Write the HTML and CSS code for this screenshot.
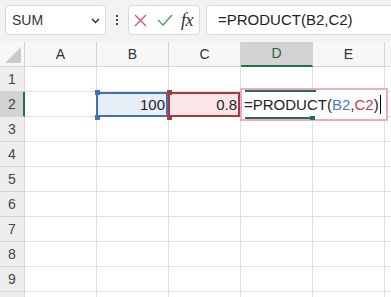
FILE: index.html
```html
<!DOCTYPE html>
<html>
<head>
<meta charset="utf-8">
<link rel="stylesheet" href="styles.css">
</head>
<body>
<div class="toolbar">
  <div class="namebox"><span>SUM</span><svg class="chev" width="9" height="6" viewBox="0 0 9 6"><polyline points="1,1 4.5,4.5 8,1" fill="none" stroke="#333" stroke-width="1.5"/></svg></div>
  <div class="grip"><i></i><i></i><i></i></div>
  <div class="btns">
    <svg class="ico-x" width="13" height="13" viewBox="0 0 13 13"><path d="M1 1 L12 12 M12 1 L1 12" stroke="#d0585c" stroke-width="1.3" fill="none"/></svg>
    <svg class="ico-ok" width="16" height="12" viewBox="0 0 16 12"><polyline points="1,6 6,11 15,1" fill="none" stroke="#4f9d63" stroke-width="1.4"/></svg>
    <span class="fx">fx</span>
  </div>
  <div class="formula">=PRODUCT(B2,C2)</div>
</div>
<div class="sheet">
  <div class="corner"><svg width="25" height="25" viewBox="0 0 25 25"><polygon points="5,21 21,21 21,5" fill="#c9c9c9"/></svg></div>
  <div class="ch">A</div><div class="ch">B</div><div class="ch">C</div><div class="ch ch-sel">D</div><div class="ch">E</div><div class="ch"></div>

  <div class="rh">1</div><div class="cell"></div><div class="cell"></div><div class="cell"></div><div class="cell"></div><div class="cell"></div><div class="cell"></div>

  <div class="rh rh-sel">2</div>
  <div class="cell"></div>
  <div class="cell ref ref-b">100<i class="hd tl"></i><i class="hd bl"></i></div>
  <div class="cell ref ref-c">0.8<i class="hd tl"></i><i class="hd bl"></i></div>
  <div class="cell">
    <div class="edit"><i class="gl gl-top"></i><i class="gl gl-bot"></i><i class="fill"></i>=PRODUCT(<span class="rb">B2</span>,<span class="rc">C2</span>)<span class="caret"></span></div>
  </div>
  <div class="cell"></div><div class="cell"></div>

  <div class="rh">3</div><div class="cell"></div><div class="cell"></div><div class="cell"></div><div class="cell"></div><div class="cell"></div><div class="cell"></div>
  <div class="rh">4</div><div class="cell"></div><div class="cell"></div><div class="cell"></div><div class="cell"></div><div class="cell"></div><div class="cell"></div>
  <div class="rh">5</div><div class="cell"></div><div class="cell"></div><div class="cell"></div><div class="cell"></div><div class="cell"></div><div class="cell"></div>
  <div class="rh">6</div><div class="cell"></div><div class="cell"></div><div class="cell"></div><div class="cell"></div><div class="cell"></div><div class="cell"></div>
  <div class="rh">7</div><div class="cell"></div><div class="cell"></div><div class="cell"></div><div class="cell"></div><div class="cell"></div><div class="cell"></div>
  <div class="rh">8</div><div class="cell"></div><div class="cell"></div><div class="cell"></div><div class="cell"></div><div class="cell"></div><div class="cell"></div>
  <div class="rh">9</div><div class="cell"></div><div class="cell"></div><div class="cell"></div><div class="cell"></div><div class="cell"></div><div class="cell"></div>
  <div class="rh"></div><div class="cell"></div><div class="cell"></div><div class="cell"></div><div class="cell"></div><div class="cell"></div><div class="cell"></div>
</div>
</body>
</html>
```
FILE: styles.css
```css
html, body {
  margin: 0;
  padding: 0;
}
body {
  width: 391px;
  height: 297px;
  overflow: hidden;
  background: #fff;
  font-family: "Liberation Sans", Arial, sans-serif;
  color: #222;
}
.toolbar {
  display: flex;
  align-items: flex-start;
  height: 42px;
  box-sizing: border-box;
  padding: 5px 0 0 5px;
  background: #f3f3f3;
  overflow: hidden;
}
.namebox {
  width: 101px;
  height: 30px;
  box-sizing: border-box;
  background: #fff;
  border: 1px solid #d9d9d9;
  border-radius: 4px;
  display: flex;
  align-items: center;
  justify-content: space-between;
  padding: 0 5px 0 6px;
  font-size: 14px;
  color: #333;
}
.chev {
  margin-top: 1px;
}
.grip {
  width: 22px;
  height: 30px;
  display: flex;
  flex-direction: column;
  align-items: center;
  justify-content: center;
  gap: 2px;
}
.grip i {
  display: block;
  width: 2px;
  height: 2px;
  background: #444;
}
.btns {
  width: 72px;
  height: 30px;
  box-sizing: border-box;
  background: #fff;
  border: 1px solid #d9d9d9;
  border-radius: 4px;
  display: flex;
  align-items: center;
  padding-left: 5px;
}
.ico-ok {
  margin-left: 10px;
}
.fx {
  margin-left: 8px;
  font-family: "Liberation Serif", "Times New Roman", serif;
  font-style: italic;
  font-size: 18px;
  color: #333;
  letter-spacing: -0.5px;
}
.formula {
  flex: 1;
  margin-left: 6px;
  margin-right: -6px;
  height: 30px;
  box-sizing: border-box;
  background: #fff;
  border: 1px solid #d9d9d9;
  border-radius: 4px;
  padding-left: 11px;
  font-size: 15px;
  line-height: 28px;
  color: #222;
  white-space: nowrap;
}
.sheet {
  display: grid;
  grid-template-columns: 25px repeat(6, 72px);
  grid-auto-rows: 25px;
  width: 391px;
  height: 255px;
  overflow: hidden;
}
.corner, .ch, .rh, .cell {
  box-sizing: border-box;
  border-right: 1px solid #e0e0e0;
  border-bottom: 1px solid #e0e0e0;
  position: relative;
}
.corner {
  background: #f7f7f7;
  border-color: #d6d6d6;
}
.corner svg {
  display: block;
}
.ch {
  background: #f7f7f7;
  border-color: #d6d6d6;
  text-align: center;
  font-size: 14px;
  line-height: 24px;
  color: #333;
}
.ch-sel {
  background: #d3d3d3;
  border-bottom: 2px solid #217346;
  color: #24603c;
  line-height: 23px;
}
.rh {
  background: #eeeeee;
  border-color: #d6d6d6;
  text-align: center;
  font-size: 14px;
  line-height: 24px;
  color: #444;
}
.rh-sel {
  background: #d3d3d3;
  border-right: 2px solid #217346;
  padding-left: 1px;
}
.cell {
  font-size: 15px;
  line-height: 25px;
  text-align: right;
  padding-right: 3px;
  color: #222;
}
.ref::after {
  content: "";
  position: absolute;
  left: -1px;
  top: 0;
  right: 0;
  bottom: -1px;
  border: 2px solid;
}
.ref-b {
  background: #e8eef8;
}
.ref-b::after {
  border-color: #4370b6;
}
.ref-c {
  background: #fbe6e7;
}
.ref-c::after {
  border-color: #a8393e;
}
.hd {
  position: absolute;
  width: 5px;
  height: 5px;
  z-index: 1;
}
.ref-b .hd { background: #4370b6; }
.ref-c .hd { background: #a8393e; }
.hd.tl { left: -2px; top: -2px; }
.hd.bl { left: -2px; top: 23px; }
.edit {
  position: absolute;
  left: -1px;
  top: -4px;
  width: 148px;
  height: 33px;
  box-sizing: border-box;
  border: 2px solid #f2a8c6;
  background: #fff;
  z-index: 2;
  padding-left: 2px;
  text-align: left;
  font-size: 15px;
  line-height: 29px;
  white-space: nowrap;
  color: #222;
}
.gl {
  position: absolute;
  left: 3px;
  width: 71px;
  height: 2px;
  background: #217346;
}
.gl-top { top: 0; }
.gl-bot { top: 27px; width: 66px; }
.fill {
  position: absolute;
  left: 68px;
  top: 26px;
  width: 5px;
  height: 4px;
  background: #217346;
}
.rb { color: #4a7cc4; }
.rc { color: #c0424a; }
.caret {
  display: inline-block;
  width: 1px;
  height: 19px;
  background: #000;
  vertical-align: middle;
  margin-left: 1px;
  margin-top: -3px;
}
```
